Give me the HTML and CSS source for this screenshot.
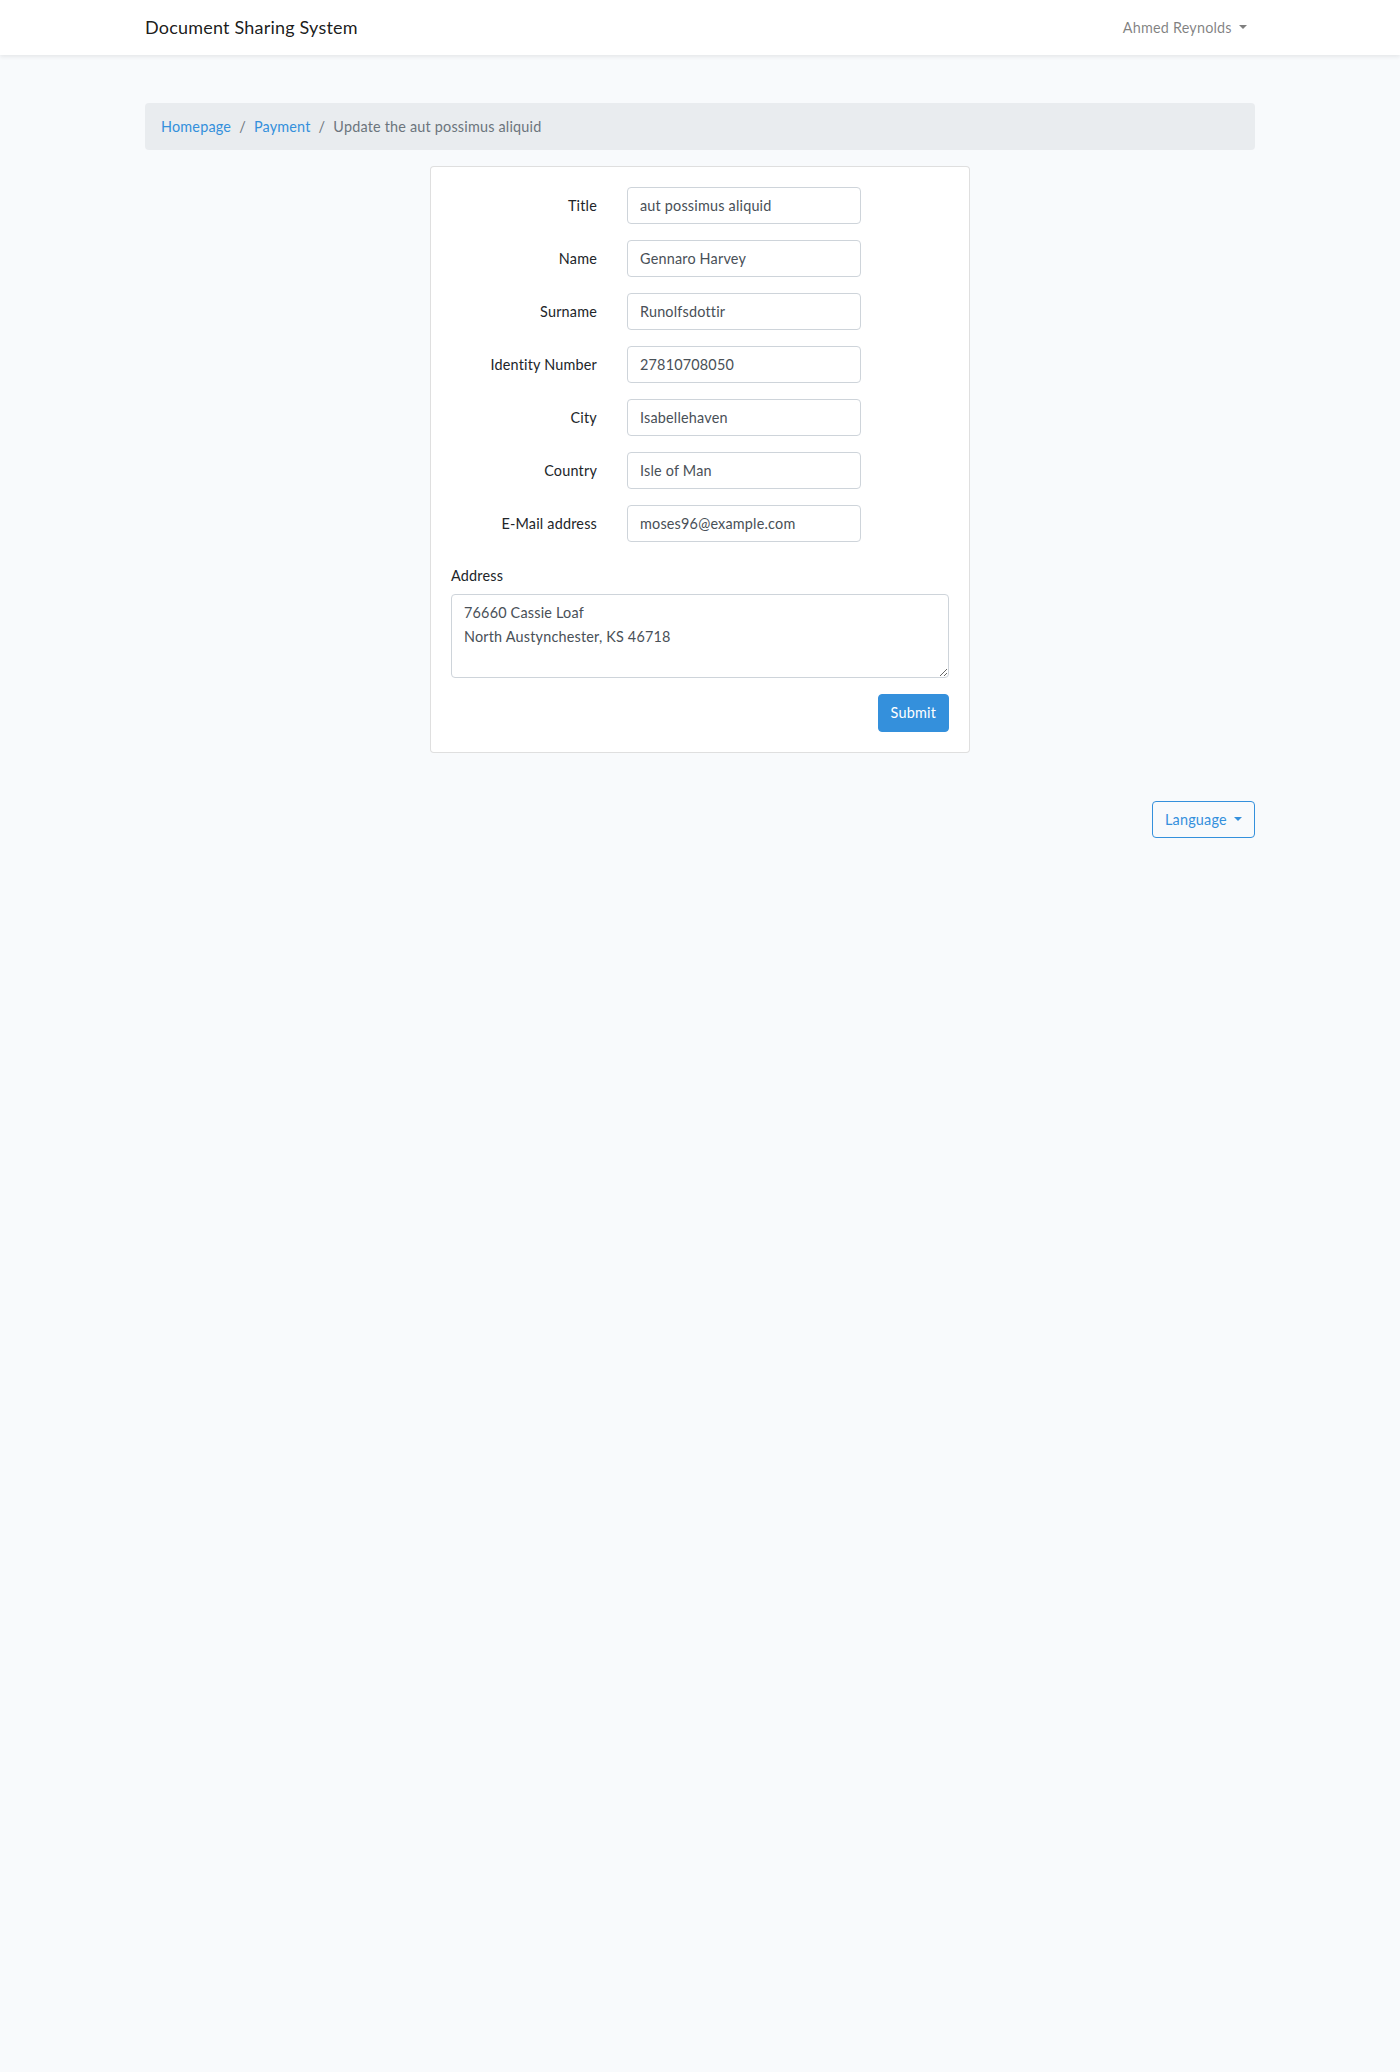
FILE: index.html
```html
<!DOCTYPE html>
<html lang="en">
<head>
  <meta charset="UTF-8" />
  <meta name="viewport" content="width=device-width, initial-scale=1.0"/>
  <title>Document Sharing System</title>
  <link rel="stylesheet" href="styles.css">
</head>
<body>
  <nav class="navbar">
    <div class="container navbar-inner">
      <a class="navbar-brand" href="#">Document Sharing System</a>
      <a class="nav-link dropdown-toggle" href="#">Ahmed Reynolds</a>
    </div>
  </nav>

  <main class="main">
    <div class="container">
      <ol class="breadcrumb">
        <li class="breadcrumb-item"><a href="#">Homepage</a></li>
        <li class="breadcrumb-item"><a href="#">Payment</a></li>
        <li class="breadcrumb-item active">Update the aut possimus aliquid</li>
      </ol>

      <div class="card">
        <div class="card-body">
          <form>
            <div class="form-group row">
              <label class="col-label" for="title">Title</label>
              <div class="col-input"><input type="text" id="title" class="form-control" value="aut possimus aliquid"></div>
            </div>
            <div class="form-group row">
              <label class="col-label" for="name">Name</label>
              <div class="col-input"><input type="text" id="name" class="form-control" value="Gennaro Harvey"></div>
            </div>
            <div class="form-group row">
              <label class="col-label" for="surname">Surname</label>
              <div class="col-input"><input type="text" id="surname" class="form-control" value="Runolfsdottir"></div>
            </div>
            <div class="form-group row">
              <label class="col-label" for="identity">Identity Number</label>
              <div class="col-input"><input type="text" id="identity" class="form-control" value="27810708050"></div>
            </div>
            <div class="form-group row">
              <label class="col-label" for="city">City</label>
              <div class="col-input"><input type="text" id="city" class="form-control" value="Isabellehaven"></div>
            </div>
            <div class="form-group row">
              <label class="col-label" for="country">Country</label>
              <div class="col-input"><input type="text" id="country" class="form-control" value="Isle of Man"></div>
            </div>
            <div class="form-group row">
              <label class="col-label" for="email">E-Mail address</label>
              <div class="col-input"><input type="email" id="email" class="form-control" value="moses96@example.com"></div>
            </div>
            <div class="form-group address-group">
              <label class="block-label" for="address">Address</label>
              <textarea id="address" class="form-control" rows="3">76660 Cassie Loaf
North Austynchester, KS 46718</textarea>
            </div>
            <div class="form-actions">
              <button type="submit" class="btn btn-primary">Submit</button>
            </div>
          </form>
        </div>
      </div>

      <div class="language-bar">
        <button type="button" class="btn btn-outline dropdown-toggle">Language</button>
      </div>
    </div>
  </main>
</body>
</html>
```

FILE: styles.css
```css
:root {
  --primary-color: #3490dc;
  --text-color: #212529;
  --muted-color: #6c757d;
  --border-color: #ced4da;
  --body-bg: #f8fafc;
}

* {
  box-sizing: border-box;
}

body {
  margin: 0;
  font-family: Lato, 'Noto Sans', sans-serif;
  font-size: 14.4px;
  line-height: 1.6;
  letter-spacing: 0.2px;
  color: var(--text-color);
  background-color: var(--body-bg);
}

a {
  color: var(--primary-color);
  text-decoration: none;
}

.container {
  width: 1140px;
  margin: 0 auto;
  padding: 0 15px;
}

.navbar {
  background-color: white;
  box-shadow: 0 2px 4px rgba(0,0,0,0.075);
  padding: 8px 0;
}

.navbar-inner {
  display: flex;
  justify-content: space-between;
  align-items: center;
}

.navbar-brand {
  color: rgba(0,0,0,0.9);
  font-size: 18px;
  line-height: 1.6;
  padding: 5px 0;
}

.nav-link {
  color: rgba(0,0,0,0.5);
  padding: 8px;
}

.dropdown-toggle::after {
  content: "";
  display: inline-block;
  margin-left: 0.5em;
  vertical-align: 0.255em;
  border-top: 0.3em solid;
  border-right: 0.3em solid transparent;
  border-left: 0.3em solid transparent;
}

.main {
  padding: 24px 0;
}

.breadcrumb {
  display: flex;
  list-style: none;
  margin: 24px 0 16px;
  padding: 12px 16px;
  background-color: #e9ecef;
  border-radius: 4px;
}

.breadcrumb-item + .breadcrumb-item {
  padding-left: 8px;
}

.breadcrumb-item + .breadcrumb-item::before {
  content: "/";
  color: var(--muted-color);
  padding-right: 8px;
}

.breadcrumb-item.active {
  color: var(--muted-color);
}

.card {
  width: 540px;
  margin: 0 auto;
  background-color: white;
  border: 1px solid rgba(0,0,0,0.125);
  border-radius: 4px;
}

.card-body {
  padding: 20px;
}

.form-group {
  margin-bottom: 16px;
}

.address-group {
  padding-top: 6px;
}

.row {
  display: flex;
  margin: 0 -15px 16px;
}

.col-label {
  width: 176px;
  padding: 7px 15px;
  text-align: right;
}

.col-input {
  width: 264px;
  padding: 0 15px;
}

.block-label {
  display: inline-block;
  margin-bottom: 7px;
}

.form-control {
  display: block;
  width: 100%;
  height: 37px;
  padding: 6px 12px;
  font-family: inherit;
  font-size: 14.4px;
  line-height: 1.6;
  letter-spacing: inherit;
  color: #495057;
  background-color: white;
  border: 1px solid var(--border-color);
  border-radius: 4px;
}

textarea.form-control {
  height: 84px;
  resize: vertical;
}

.form-actions {
  display: flex;
  justify-content: flex-end;
}

.btn {
  font-family: inherit;
  font-size: 14.4px;
  line-height: 1.6;
  letter-spacing: inherit;
  padding: 6px 12px;
  border-radius: 4px;
  border: 1px solid transparent;
  cursor: pointer;
}

.btn-primary {
  background-color: var(--primary-color);
  border-color: var(--primary-color);
  color: white;
}

.btn-outline {
  background-color: transparent;
  border-color: var(--primary-color);
  color: var(--primary-color);
}

.language-bar {
  display: flex;
  justify-content: flex-end;
  margin-top: 48px;
}
```
